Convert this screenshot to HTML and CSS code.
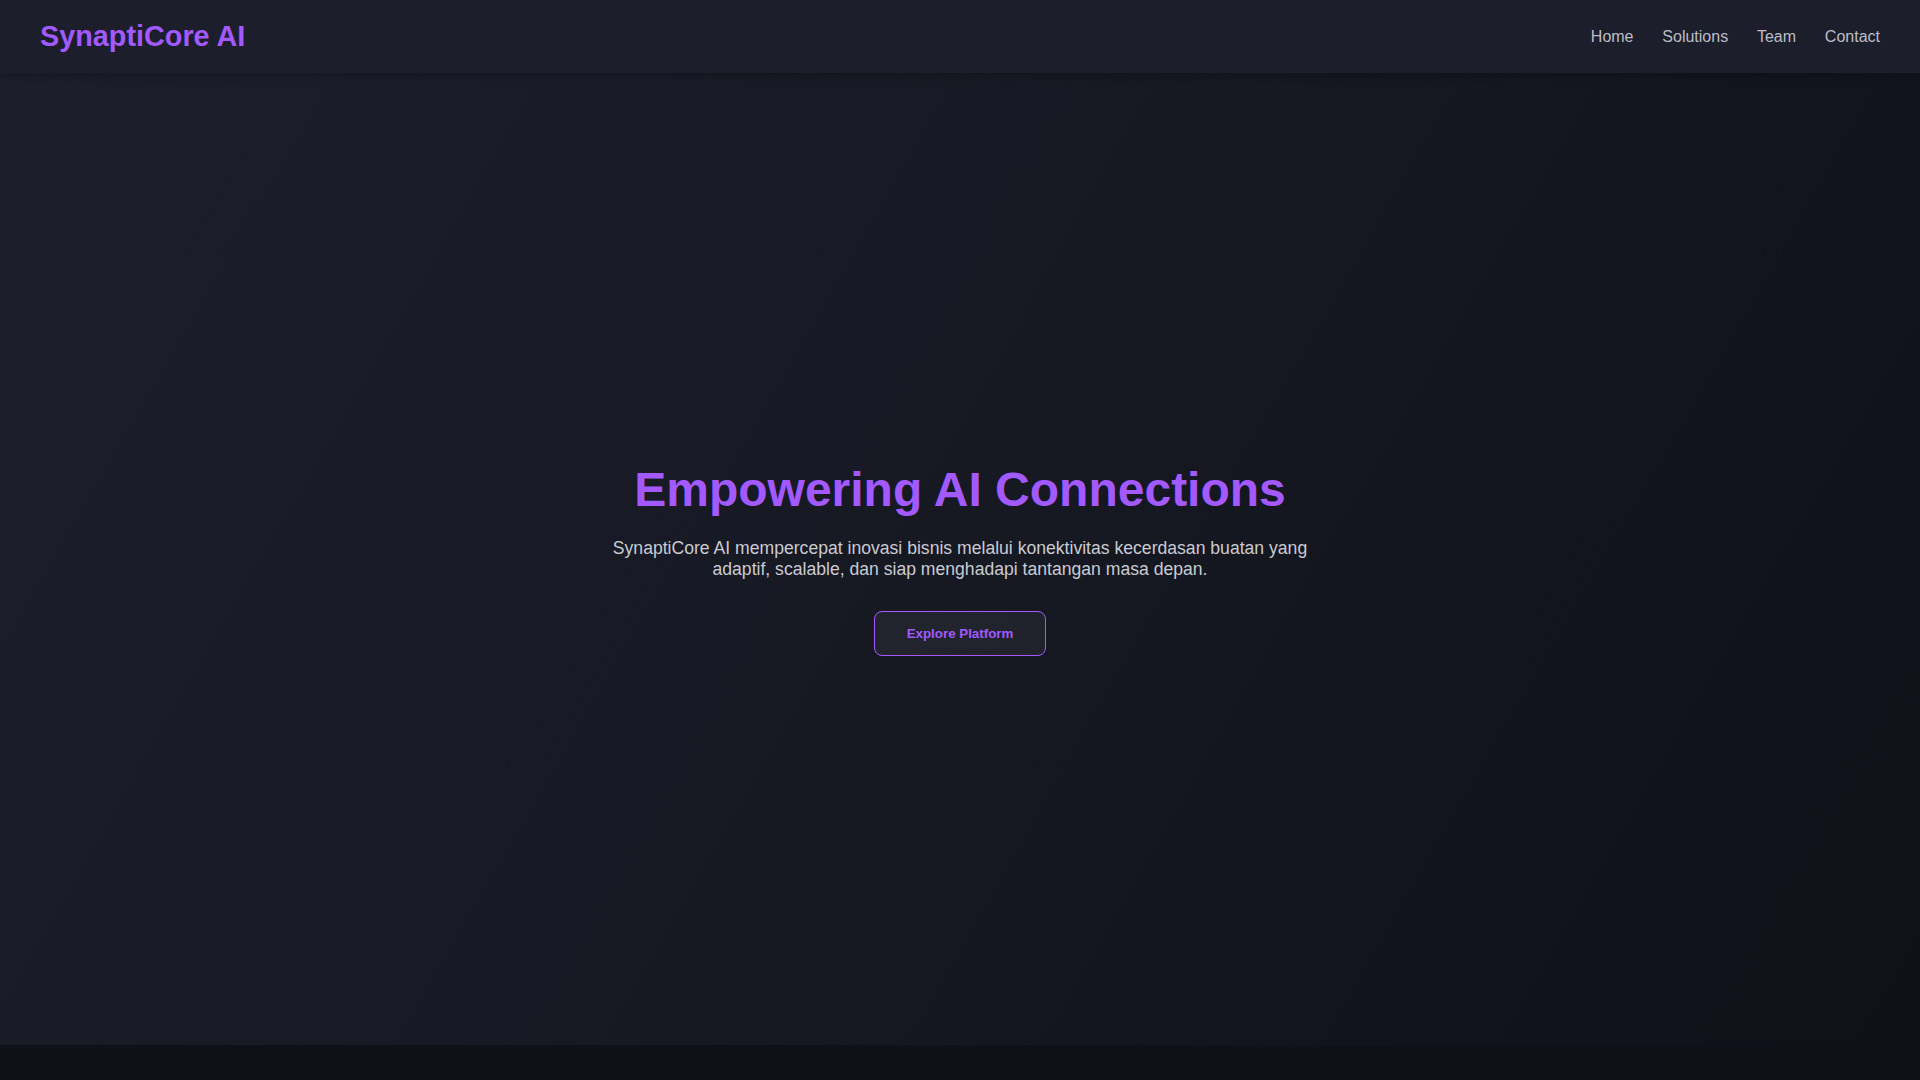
FILE: index.html
```html
<!DOCTYPE html>
<html lang="id">
<head>
    <meta charset="UTF-8">
    <meta name="viewport" content="width=device-width, initial-scale=1.0">
    <title>SynaptiCore AI</title>
    <link rel="stylesheet" href="styles.css">
</head>
<body>

    <!-- Top navigation -->
    <header class="site-header">
        <div class="logo">SynaptiCore AI</div>
        <nav class="main-nav">
            <a href="#home">Home</a>
            <a href="#solutions">Solutions</a>
            <a href="#team">Team</a>
            <a href="#contact">Contact</a>
        </nav>
    </header>

    <!-- Hero -->
    <section id="home" class="hero">
        <div class="hero-content">
            <h1>Empowering AI Connections</h1>
            <p>SynaptiCore AI mempercepat inovasi bisnis melalui konektivitas kecerdasan buatan yang adaptif, scalable, dan siap menghadapi tantangan masa depan.</p>
            <button type="button" class="btn-outline">Explore Platform</button>
        </div>
    </section>

    <!-- Next section (below the fold) -->
    <section id="solutions" class="solutions"></section>

</body>
</html>
```

FILE: styles.css
```css
html, body {
    margin: 0;
    padding: 0;
}

body {
    font-family: "Liberation Sans", Arial, sans-serif;
    background-color: #0f1118;
    color: #c9cad2;
}

/* Header bar */
.site-header {
    display: flex;
    justify-content: space-between;
    align-items: center;
    padding: 20px 40px;
    background-color: #1c1e2b;
    box-shadow: 0 2px 10px rgba(0, 0, 0, 0.25);
    position: relative;
    z-index: 2;
}

.logo {
    font-size: 1.8rem;
    font-weight: bold;
    color: #a259ff;
}

.main-nav {
    display: flex;
    gap: 1.8rem;
}

.main-nav a {
    color: #bcbdc7;
    text-decoration: none;
    font-size: 16px;
}

.main-nav a:hover {
    color: #a259ff;
}

/* Hero */
.hero {
    min-height: 90vh;
    display: flex;
    justify-content: center;
    align-items: center;
    text-align: center;
    background: linear-gradient(120deg, #1c1e2b 0%, #161822 50%, #0f1119 100%);
}

.hero-content {
    display: flex;
    flex-direction: column;
    align-items: center;
}

.hero h1 {
    font-size: 3rem;
    color: #a259ff;
    margin: 0 0 21px;
}

.hero p {
    font-size: 1.1rem;
    max-width: 700px;
    margin: 0 0 31px;
    color: #cacbd2;
}

.btn-outline {
    font-family: "Liberation Sans", Arial, sans-serif;
    font-weight: bold;
    color: #a259ff;
    background-color: rgba(255, 255, 255, 0.05);
    border: 1px solid #a259ff;
    border-radius: 8px;
    padding: 14px 32px;
    cursor: pointer;
}

.btn-outline:hover {
    background-color: rgba(162, 89, 255, 0.15);
}

.solutions {
    height: 593px;
    background-color: #0f1118;
}
```
